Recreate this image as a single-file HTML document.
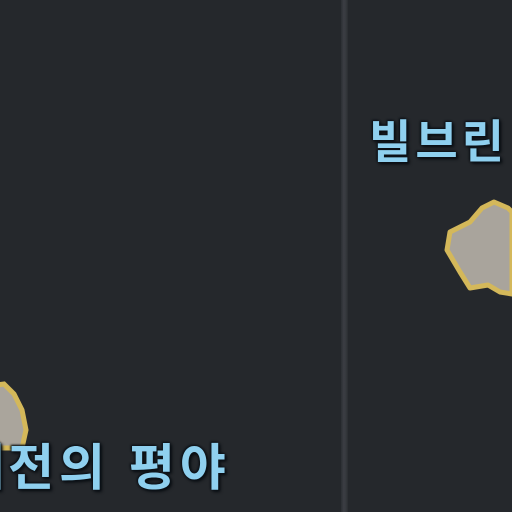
<!DOCTYPE html>
<html><head><meta charset="utf-8"><style>
html,body{margin:0;padding:0;}
body{width:512px;height:512px;overflow:hidden;position:relative;background:#25282c;}
.div{position:absolute;left:341px;top:0;width:7px;height:512px;background:linear-gradient(90deg,#2c2f34,#3b3e43 40%,#36393e 70%,#2a2d31);}
.t{position:absolute;font-family:"Liberation Sans","Noto Sans CJK KR","NanumGothic",sans-serif;font-weight:bold;color:#8fd0ef;
text-shadow:0 0 2px #0c1218,1px 1px 2px #0c1218,-1px -1px 2px #0c1218,2px 2px 3px #0a0e12;white-space:nowrap;}
.clip{position:absolute;left:0;top:420px;width:8px;height:80px;overflow:hidden;}
</style></head><body>
<div class="div"></div>
<svg width="512" height="512" style="position:absolute;left:0;top:0">
<polygon points="494,202 508,208 512,212 512,294 500,292 488,285 470,288 460,272 447,250 450,232 470,222 482,208" fill="#a9a49c" stroke="#d4b85a" stroke-width="5" stroke-linejoin="round"/>
<polygon points="-10,386 4,384 14,394 22,410 26,430 22,448 -10,448" fill="#aaa59c" stroke="#d4b85a" stroke-width="5"/>
</svg>
<div class="t" style="left:369px;top:106px;font-size:46px;letter-spacing:4px;">빌브린</div>
<div class="clip"><div class="t" style="left:-40px;top:8px;font-size:50px;">이</div></div>
<div class="t" style="left:8px;top:428px;font-size:50px;letter-spacing:5px;">전의 평야</div>
</body></html>
